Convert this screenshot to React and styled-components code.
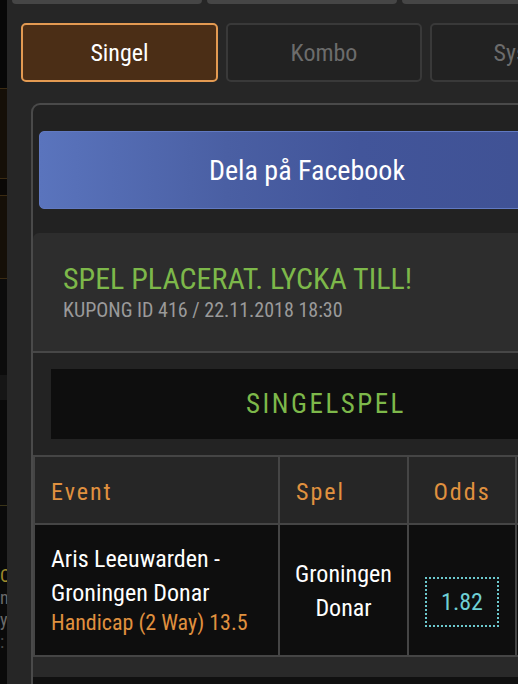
import React from "react";
import styled, { createGlobalStyle } from "styled-components";

const Global = createGlobalStyle`
  html, body { margin: 0; padding: 0; background: #262626; overflow: hidden; }
  body { font-family: "Roboto Condensed", "Roboto", "Liberation Sans", sans-serif; }
  * { box-sizing: border-box; }
`;

const Page = styled.div`
  display: flex;
  width: 518px;
  height: 684px;
  overflow: hidden;
`;

const Backdrop = styled.div`
  flex: none;
  width: 7px;
  display: flex;
  flex-direction: column;
  background: #0a0a0a;
  overflow: hidden;
`;

const Band = styled.div`
  flex: none;
  height: ${(p) => p.$h}px;
  background: ${(p) => p.$bg};
  border-top: ${(p) => (p.$line ? `1px solid ${p.$line}` : "none")};
  color: ${(p) => p.$color || "#777"};
  font-size: 18px;
  line-height: 22px;
  white-space: nowrap;
`;

const Panel = styled.div`
  flex: 1;
  min-width: 0;
  background: #262626;
  display: flex;
  flex-direction: column;
  overflow: hidden;
`;

const TopTabs = styled.div`
  display: flex;
  gap: 5px;
  padding-left: 5px;
  height: 4px;
`;

const TopTab = styled.div`
  flex: none;
  width: 190px;
  height: 4px;
  background: #464646;
  border-radius: 0 0 6px 6px;
`;

const BetTypes = styled.div`
  display: flex;
  gap: 8px;
  padding: 19px 0 0 14px;
`;

const BetTypeButton = styled.div`
  flex: none;
  width: ${(p) => p.$w}px;
  height: 59px;
  border-radius: 5px;
  border: 2px solid ${(p) => (p.$active ? "#e39a52" : "#393939")};
  background: ${(p) => (p.$active ? "#4b2e16" : "#222222")};
  color: ${(p) => (p.$active ? "#ffffff" : "#6c6c6c")};
  font-size: 24px;
  display: flex;
  align-items: center;
  justify-content: center;
`;

const OuterBox = styled.div`
  flex: none;
  margin: 21px 0 0 24px;
  width: 590px;
  border: 2px solid #4a4a4a;
  border-bottom: none;
  border-radius: 9px 9px 0 0;
  background: #222222;
  padding-top: 26px;
`;

const FbButton = styled.div`
  margin: 0 44px 0 6px;
  height: 78px;
  border: 1px solid #6179c1;
  border-radius: 5px;
  background: linear-gradient(90deg, #5a74bd 0%, #4a5fa3 35%, #42559a 60%, #3f5193 100%);
  color: #ffffff;
  font-size: 28px;
  display: flex;
  align-items: center;
  justify-content: center;
`;

const Receipt = styled.div`
  margin-top: 24px;
  background: #2d2d2d;
  border-radius: 6px 6px 0 0;
`;

const ReceiptHeader = styled.div`
  padding: 29px 30px 29px 30px;
`;

const ReceiptTitle = styled.div`
  font-size: 30px;
  line-height: 34px;
  color: #7db84a;
`;

const ReceiptSub = styled.div`
  margin-top: 2px;
  font-size: 20px;
  line-height: 24px;
  color: #9a9a9a;
`;

const SectionBar = styled.div`
  border-top: 2px solid #474747;
  background: #232323;
  padding: 16px 18px;
`;

const SectionTitle = styled.div`
  height: 70px;
  background: #0e0e0e;
  color: #7db84a;
  font-size: 27px;
  letter-spacing: 2.5px;
  display: flex;
  align-items: center;
  justify-content: center;
`;

const Table = styled.div`
  display: grid;
  grid-template-columns: 243px 127px 106px 1fr;
  gap: 2px;
  background: #454545;
  padding: 2px 0 2px 2px;
`;

const HeadCell = styled.div`
  background: #262626;
  height: 66px;
  display: flex;
  align-items: center;
  justify-content: ${(p) => (p.$center ? "center" : "flex-start")};
  padding: 3px 16px 0 16px;
  font-size: 24px;
  letter-spacing: 2px;
  color: #e0913f;
`;

const BodyCell = styled.div`
  background: #0e0e0e;
  height: 130px;
`;

const EventCell = styled(BodyCell)`
  padding: 17px 16px;
`;

const EventName = styled.div`
  font-size: 24px;
  line-height: 34px;
  color: #ffffff;
  white-space: nowrap;
`;

const Market = styled.div`
  font-size: 22px;
  line-height: 26px;
  color: #e0913f;
  white-space: nowrap;
`;

const SpelCell = styled(BodyCell)`
  display: flex;
  align-items: center;
  justify-content: center;
  padding-top: 2px;
  text-align: center;
  font-size: 24px;
  line-height: 34px;
  color: #ffffff;
`;

const OddsCell = styled(BodyCell)`
  display: flex;
  justify-content: center;
  align-items: flex-start;
  padding-top: 52px;
`;

const OddsBox = styled.div`
  width: 74px;
  height: 50px;
  border: 2px dotted #6cc9ce;
  color: #6fcfd4;
  font-size: 24px;
  display: flex;
  align-items: center;
  justify-content: center;
`;

const Footer = styled.div`
  background: #292929;
  padding-top: 20px;
`;

const Banner = styled.div`
  height: 40px;
  background: #101010;
  padding-left: 435px;
  display: flex;
  align-items: flex-start;
`;

export default function App() {
  return (
    <>
      <Global />
      <Page>
        <Backdrop>
          <Band $h={88} $bg="#070707" />
          <Band $h={90} $bg="#150f07" $line="#3b2b12" />
          <Band $h={17} $bg="#0a0806" $line="#3b2b12" />
          <Band $h={83} $bg="#150f07" $line="#3b2b12" />
          <Band $h={97} $bg="#0c0c0c" $line="#3b2b12" />
          <Band $h={25} $bg="#161616" />
          <Band $h={105} $bg="#0a0a0a" />
          <Band $h={60} $bg="#0a0a0a" $line="#3a3418" />
          <Band $h={22} $bg="#0a0a0a" $color="#a08a2c">C</Band>
          <Band $h={22} $bg="#0a0a0a" $color="#6a6a6a">ne</Band>
          <Band $h={22} $bg="#0a0a0a" $color="#6a6a6a">y</Band>
          <Band $h={53} $bg="#0a0a0a" $color="#4a4a4a">:</Band>
        </Backdrop>
        <Panel>
          <TopTabs>
            <TopTab />
            <TopTab />
            <TopTab />
          </TopTabs>
          <BetTypes>
            <BetTypeButton $active $w={197}>Singel</BetTypeButton>
            <BetTypeButton $w={196}>Kombo</BetTypeButton>
            <BetTypeButton $w={197}>System</BetTypeButton>
          </BetTypes>
          <OuterBox>
            <FbButton>Dela på Facebook</FbButton>
            <Receipt>
              <ReceiptHeader>
                <ReceiptTitle>SPEL PLACERAT. LYCKA TILL!</ReceiptTitle>
                <ReceiptSub>KUPONG ID 416 / 22.11.2018 18:30</ReceiptSub>
              </ReceiptHeader>
              <SectionBar>
                <SectionTitle>SINGELSPEL</SectionTitle>
              </SectionBar>
              <Table>
                <HeadCell>Event</HeadCell>
                <HeadCell>Spel</HeadCell>
                <HeadCell $center>Odds</HeadCell>
                <HeadCell />
                <EventCell>
                  <EventName>Aris Leeuwarden -</EventName>
                  <EventName>Groningen Donar</EventName>
                  <Market>Handicap (2 Way) 13.5</Market>
                </EventCell>
                <SpelCell>
                  Groningen
                  <br />
                  Donar
                </SpelCell>
                <OddsCell>
                  <OddsBox>1.82</OddsBox>
                </OddsCell>
                <BodyCell />
              </Table>
              <Footer>
                <Banner>
                  <svg width="60" height="40" viewBox="0 0 60 40">
                    <path d="M2 28 C 14 20, 30 16, 48 12 L 58 10 L 58 16 C 40 18, 22 24, 6 32 Z" fill="#c8232a" />
                    <path d="M12 24 C 24 18, 38 14, 50 12 L 52 14 C 38 16, 24 20, 14 26 Z" fill="#e8484e" />
                    <circle cx="45" cy="13" r="1.2" fill="#ffffff" />
                  </svg>
                </Banner>
              </Footer>
            </Receipt>
          </OuterBox>
        </Panel>
      </Page>
    </>
  );
}
